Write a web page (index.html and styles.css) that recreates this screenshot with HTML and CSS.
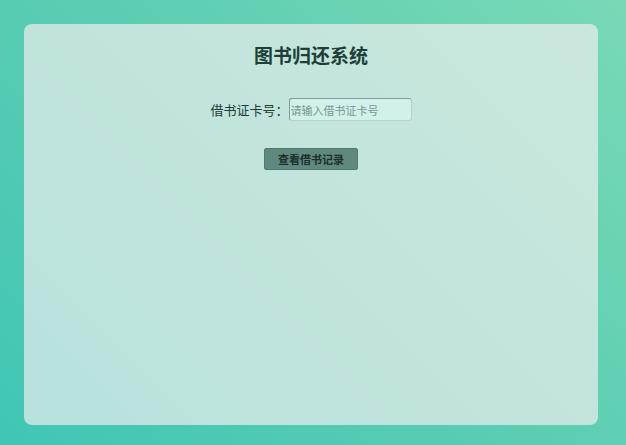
FILE: index.html
```html
<!DOCTYPE html>
<html lang="zh">
<head>
<meta charset="utf-8">
<title>图书归还系统</title>
<link rel="stylesheet" href="styles.css">
</head>
<body>
<div class="panel">
  <h2 class="title">图书归还系统</h2>
  <div class="form-row">
    <label class="label" for="card">借书证卡号：</label>
    <input class="input" id="card" type="text" placeholder="请输入借书证卡号">
  </div>
  <div class="btn-row">
    <button class="btn" type="button">查看借书记录</button>
  </div>
</div>
</body>
</html>
```
FILE: styles.css
```css
html, body {
  margin: 0;
  height: 100%;
}
body {
  background: linear-gradient(45deg, #40c6b5 0%, #5ccdb2 50%, #78d9b6 100%);
  font-family: "Noto Sans CJK SC", "Liberation Sans", sans-serif;
  padding: 24px 28px 20px 24px;
  box-sizing: border-box;
}
.panel {
  height: 401px;
  border-radius: 8px;
  background: rgba(246, 240, 241, 0.66);
  display: flex;
  flex-direction: column;
  align-items: center;
  box-sizing: border-box;
  padding-top: 17px;
}
.title {
  margin: 0;
  font-size: 19px;
  font-weight: 700;
  color: #1d3f38;
  line-height: 28px;
}
.form-row {
  margin-top: 29px;
  display: flex;
  align-items: center;
}
.label {
  font-size: 13px;
  color: #1f3d37;
}
.input {
  width: 123px;
  height: 23px;
  box-sizing: border-box;
  border: 1px solid #b5d2cb;
  border-top-color: #7f9f97;
  border-left-color: #7f9f97;
  border-radius: 3px;
  background: #d2f1ea;
  padding: 0 1px;
  font-size: 11px;
  font-family: "Noto Sans CJK SC", "Liberation Sans", sans-serif;
  color: #333;
}
.input::placeholder {
  color: #7a9590;
}
.btn-row {
  margin-top: 24px;
}
.btn {
  width: 94px;
  height: 22px;
  border: 1px solid #55786f;
  border-radius: 2px;
  background: #5f897f;
  color: #1b2f2b;
  font-size: 11px;
  font-weight: 700;
  font-family: "Noto Sans CJK SC", "Liberation Sans", sans-serif;
  padding: 0;
}
```
